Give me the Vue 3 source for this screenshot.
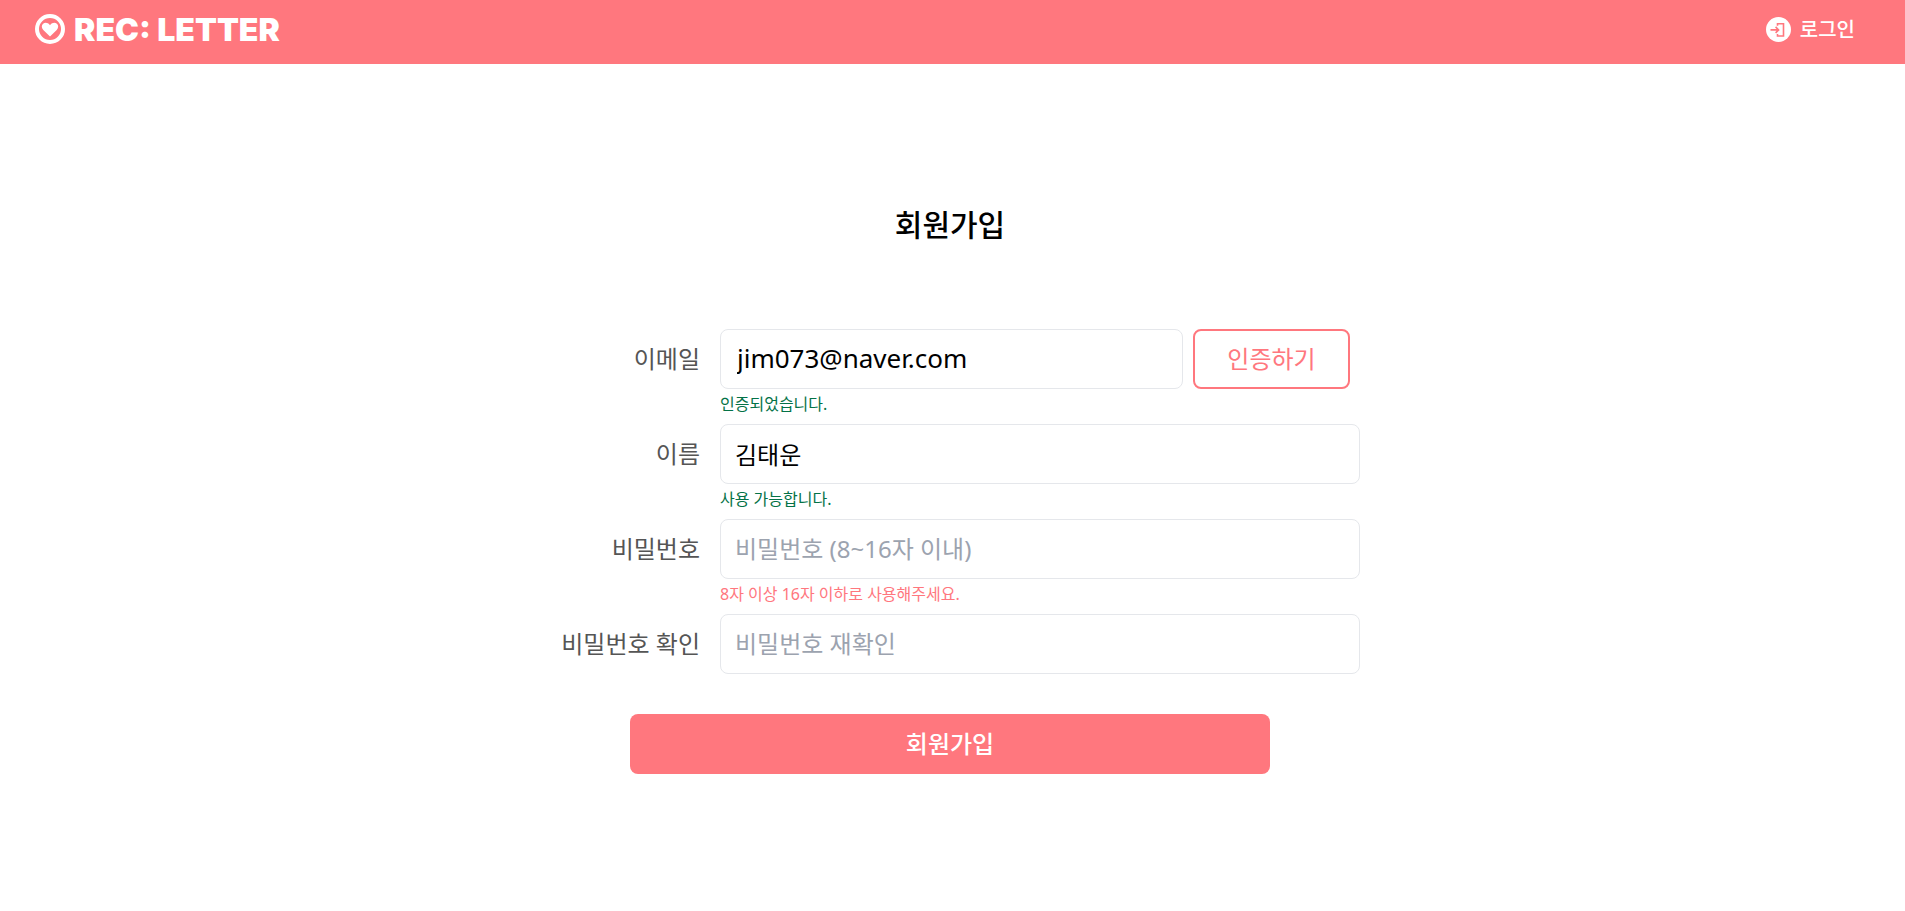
<script setup>
import { ref } from 'vue'

const email = ref('jim073@naver.com')
const name = ref('김태운')
const password = ref('')
const passwordCheck = ref('')
</script>

<template>
  <header class="bar">
    <a class="logo" href="#">
      <svg class="logo-icon" viewBox="0 0 30 30" aria-hidden="true">
        <circle cx="15" cy="15" r="13" fill="none" stroke="#fff" stroke-width="4" />
        <path
          d="M15 22.6 L8.3 15.9 C6.3 13.8 6.4 11.2 8.1 9.8 C10 8.3 12.9 8.5 15 11.2 C17.1 8.5 20 8.3 21.9 9.8 C23.6 11.2 23.7 13.8 21.7 15.9 Z"
          fill="#fff"
        />
      </svg>
      <span class="logo-text">REC: LETTER</span>
    </a>
    <a class="login" href="#">
      <svg class="login-icon" viewBox="0 0 25 25" aria-hidden="true">
        <circle cx="12.5" cy="12.5" r="12.5" fill="#fff" />
        <g fill="none" stroke="#ff777e" stroke-width="1.6">
          <path d="M11.5 8.8 V6.8 H17.5 V19 H11.5 V17" />
          <path d="M4.5 12.9 H12 M9.6 9.9 L12.6 12.9 L9.6 15.9" />
        </g>
      </svg>
      <span class="login-text">로그인</span>
    </a>
  </header>

  <main class="page">
    <h1 class="title">회원가입</h1>
    <form class="form" @submit.prevent>
      <div class="row">
        <label class="label" for="email">이메일</label>
        <div class="field">
          <div class="email">
            <input id="email" v-model="email" class="input address" type="text" />
            <button class="verify" type="button">인증하기</button>
          </div>
          <p class="hint ok">인증되었습니다.</p>
        </div>
      </div>
      <div class="row">
        <label class="label" for="name">이름</label>
        <div class="field">
          <input id="name" v-model="name" class="input" type="text" />
          <p class="hint ok">사용 가능합니다.</p>
        </div>
      </div>
      <div class="row">
        <label class="label" for="password">비밀번호</label>
        <div class="field">
          <input id="password" v-model="password" class="input" type="password" placeholder="비밀번호 (8~16자 이내)" />
          <p class="hint error">8자 이상 16자 이하로 사용해주세요.</p>
        </div>
      </div>
      <div class="row">
        <label class="label" for="password-check">비밀번호 확인</label>
        <div class="field">
          <input id="password-check" v-model="passwordCheck" class="input" type="password" placeholder="비밀번호 재확인" />
        </div>
      </div>
      <button class="submit" type="submit">회원가입</button>
    </form>
  </main>
</template>

<style>
body {
  margin: 0;
  background: #fff;
}
</style>

<style scoped>
.bar,
.page {
  font-family: 'Noto Sans', 'Noto Sans CJK KR', sans-serif;
}

.bar {
  box-sizing: border-box;
  display: flex;
  align-items: center;
  justify-content: space-between;
  height: 64px;
  padding: 0 50px 6px 35px;
  background: #ff777e;
}

.logo,
.login {
  display: flex;
  align-items: center;
  gap: 9px;
  color: #fff;
  text-decoration: none;
}

.logo {
  font-family: Inter, sans-serif;
  font-size: 32px;
  font-weight: 900;
  line-height: 40px;
}

.logo-text,
.login-text {
  padding-top: 2px;
}

.logo-icon {
  width: 30px;
  height: 30px;
}

.login {
  font-size: 20px;
  font-weight: 500;
  line-height: 30px;
}

.login-icon {
  width: 25px;
  height: 25px;
}

.page {
  padding: 140px 5px 0 0;
}

.title {
  margin: 0 0 83px;
  font-size: 30px;
  font-weight: 500;
  line-height: 42px;
  text-align: center;
  color: #000;
}

.form {
  display: flex;
  flex-direction: column;
  align-items: center;
  max-width: 820px;
  margin: 0 auto;
}

.row {
  display: flex;
  gap: 20px;
  width: 100%;
}

.label {
  flex: none;
  width: 160px;
  font-size: 24px;
  line-height: 60px;
  text-align: right;
  white-space: nowrap;
  color: #555;
}

.field {
  flex: 1;
  min-width: 0;
}

.email {
  display: flex;
  gap: 10px;
  padding-right: 10px;
}

.input {
  box-sizing: border-box;
  display: block;
  width: 100%;
  min-width: 0;
  height: 60px;
  padding: 0 14px 2px;
  border: 1px solid #e5e7eb;
  border-radius: 8px;
  background: #fff;
  font-family: inherit;
  font-size: 24px;
  color: #000;
  outline: none;
}

.address {
  padding-left: 16px;
  font-size: 26px;
}

.input::placeholder {
  color: #9ca3af;
  opacity: 1;
}

.verify,
.submit {
  box-sizing: border-box;
  height: 60px;
  padding: 0;
  border-radius: 8px;
  font-family: inherit;
  font-size: 24px;
  line-height: 30px;
  cursor: pointer;
}

.verify {
  flex: none;
  width: 157px;
  border: 2px solid #ff777e;
  background: #fff;
  color: #ff777e;
}

.submit {
  width: 640px;
  max-width: 100%;
  margin-top: 40px;
  border: 0;
  background: #ff777e;
  font-weight: 500;
  color: #fff;
}

.hint {
  height: 35px;
  margin: 0;
  font-size: 16px;
  line-height: 30px;
}

.ok {
  color: #047247;
}

.error {
  color: #ff777e;
}
</style>
